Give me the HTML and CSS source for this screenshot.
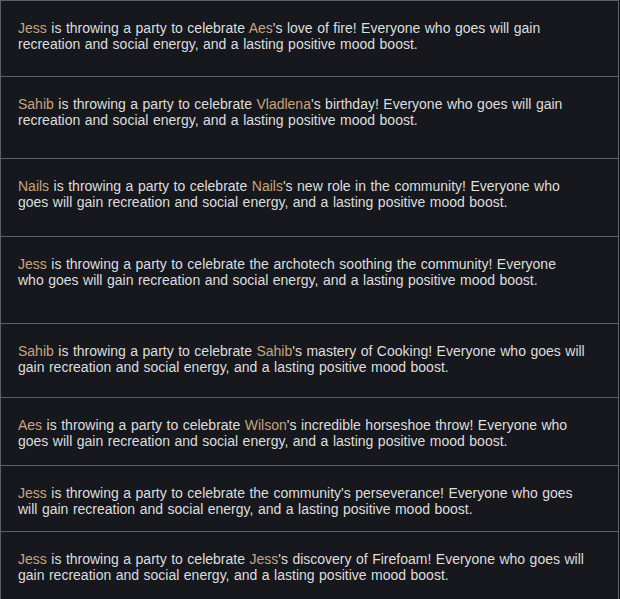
FILE: index.html
```html
<!DOCTYPE html>
<html lang="en">
<head>
<meta charset="utf-8">
<title>Parties</title>
<link rel="stylesheet" href="styles.css">
</head>
<body>
<div class="list">
  <div class="item h76"><p class="msg"><span class="name">Jess</span> is throwing a party to celebrate <span class="name">Aes</span>'s love of fire! Everyone who goes will gain recreation and social energy, and a lasting positive mood boost.</p></div>
  <div class="item h82"><p class="msg"><span class="name">Sahib</span> is throwing a party to celebrate <span class="name">Vladlena</span>'s birthday! Everyone who goes will gain recreation and social energy, and a lasting positive mood boost.</p></div>
  <div class="item h78"><p class="msg"><span class="name">Nails</span> is throwing a party to celebrate <span class="name">Nails</span>'s new role in the community! Everyone who goes will gain recreation and social energy, and a lasting positive mood boost.</p></div>
  <div class="item h87"><p class="msg"><span class="name">Jess</span> is throwing a party to celebrate the archotech soothing the community! Everyone who goes will gain recreation and social energy, and a lasting positive mood boost.</p></div>
  <div class="item h74"><p class="msg"><span class="name">Sahib</span> is throwing a party to celebrate <span class="name">Sahib</span>'s mastery of Cooking! Everyone who goes will gain recreation and social energy, and a lasting positive mood boost.</p></div>
  <div class="item h68"><p class="msg"><span class="name">Aes</span> is throwing a party to celebrate <span class="name">Wilson</span>'s incredible horseshoe throw! Everyone who goes will gain recreation and social energy, and a lasting positive mood boost.</p></div>
  <div class="item h66"><p class="msg"><span class="name">Jess</span> is throwing a party to celebrate the community's perseverance! Everyone who goes will gain recreation and social energy, and a lasting positive mood boost.</p></div>
  <div class="item h76"><p class="msg"><span class="name">Jess</span> is throwing a party to celebrate <span class="name">Jess</span>'s discovery of Firefoam! Everyone who goes will gain recreation and social energy, and a lasting positive mood boost.</p></div>
</div>
</body>
</html>
```

FILE: styles.css
```css
html, body {
  margin: 0;
  padding: 0;
  background: #15171b;
}
body {
  font-family: "Liberation Sans", Arial, sans-serif;
  font-size: 14px;
  line-height: 16px;
  word-spacing: 0.6px;
  color: #dedede;
}
.list {
  width: 619px;
  box-sizing: border-box;
  border-left: 1px solid #56616d;
  border-right: 1px solid #56616d;
}
.item {
  box-sizing: border-box;
  border-top: 1px solid #56616d;
  background: #16181d;
  padding: 19px 32.5px 0 17px;
}
.msg {
  margin: 0;
}
.name {
  color: #c9a47c;
}
.h66 { height: 66px; }
.h68 { height: 68px; }
.h74 { height: 74px; }
.h76 { height: 76px; }
.h78 { height: 78px; }
.h82 { height: 82px; }
.h87 { height: 87px; }
```
